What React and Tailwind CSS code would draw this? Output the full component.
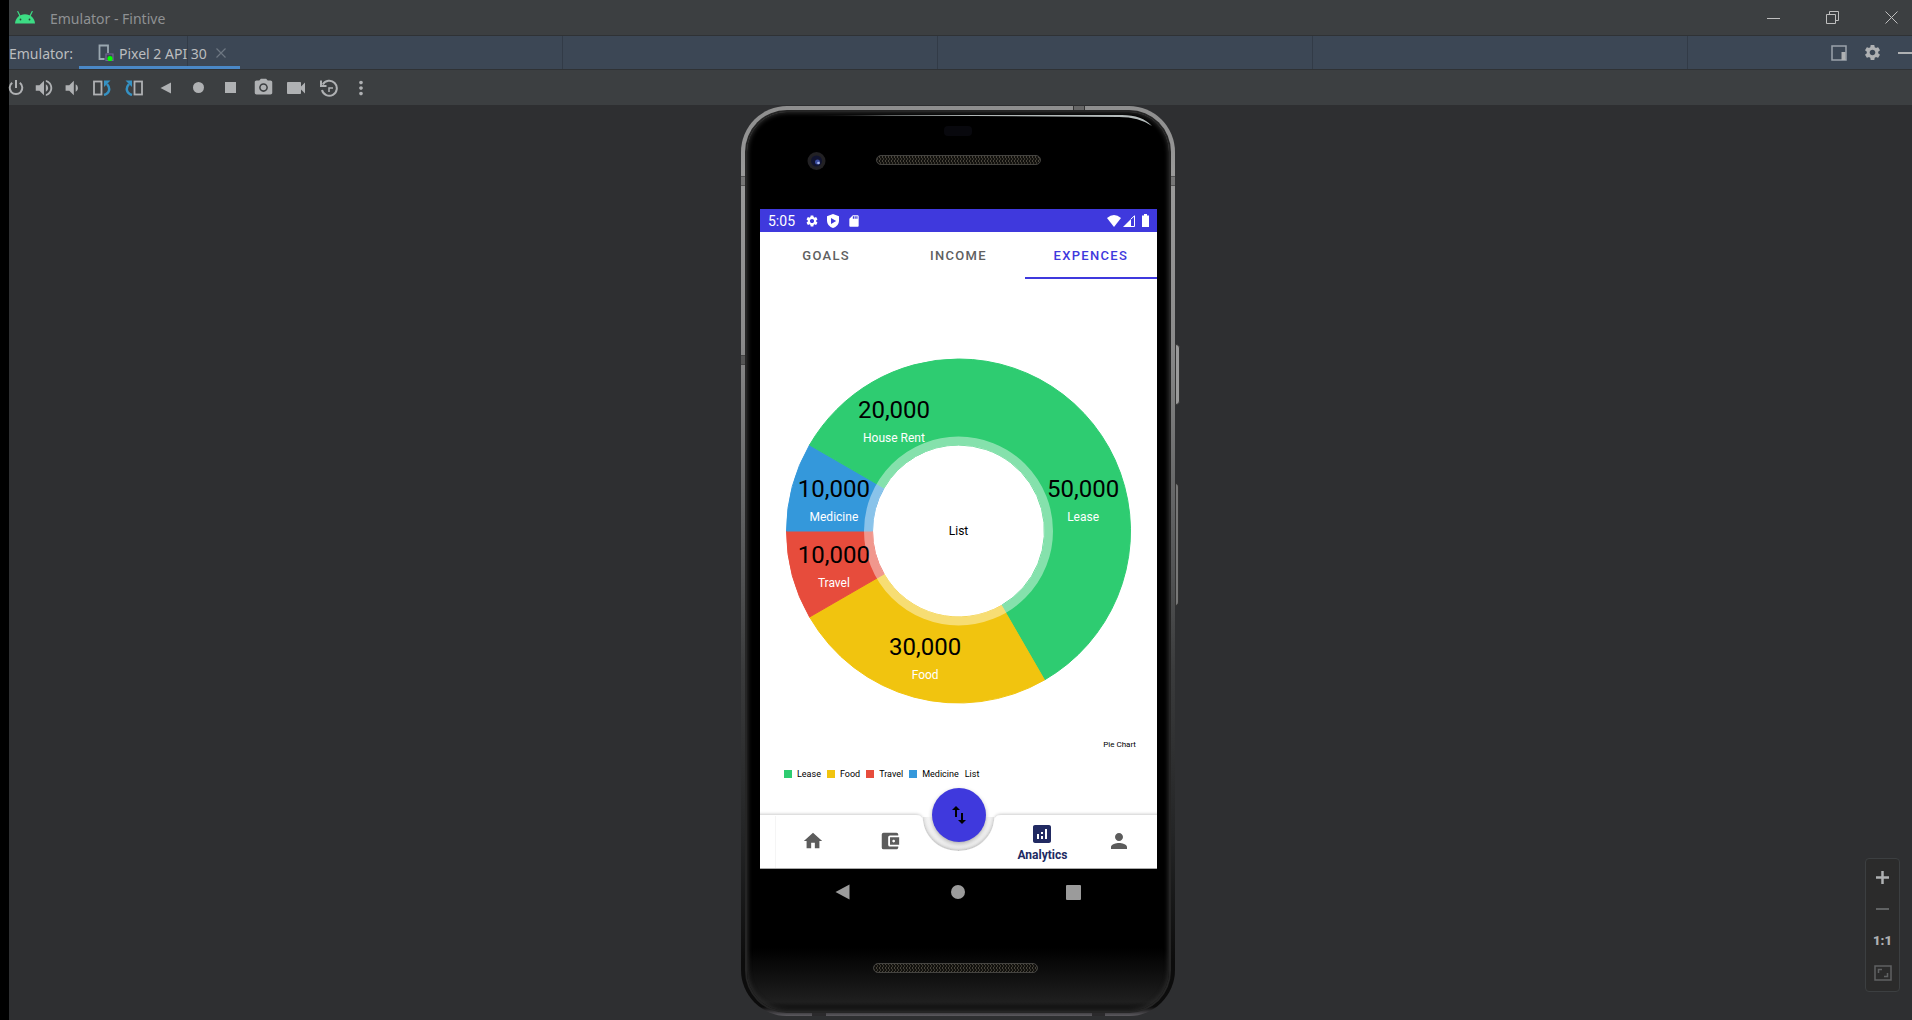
import React from "react";
import {
  MdHome,
  MdAccountBalanceWallet,
  MdAnalytics,
  MdPerson,
  MdSwapVert,
  MdSettings,
  MdSdCard,
  MdPhotoCamera,
  MdVideocam,
  MdVolumeUp,
  MdVolumeDown,
  MdMoreVert,
} from "react-icons/md";

const SLICES = [
  { label: "Lease", value: 50000, color: "#2ecc71" },
  { label: "Food", value: 30000, color: "#f1c40f" },
  { label: "Travel", value: 10000, color: "#e74c3c" },
  { label: "Medicine", value: 10000, color: "#3498db" },
  { label: "House Rent", value: 20000, color: "#2ecc71" },
];

const CX = 198.5;
const CY = 252;
const OUTER = 172;
const INNER = 86;
const RING = 94;
const LABEL = 129;

function point(radius, degrees) {
  const a = (degrees * Math.PI) / 180;
  return [CX + radius * Math.cos(a), CY + radius * Math.sin(a)];
}

function wedge(r0, r1, start, end) {
  const large = end - start > 180 ? 1 : 0;
  const [ax, ay] = point(r1, start);
  const [bx, by] = point(r1, end);
  const [cx, cy] = point(r0, end);
  const [dx, dy] = point(r0, start);
  return `M${ax} ${ay}A${r1} ${r1} 0 ${large} 1 ${bx} ${by}L${cx} ${cy}A${r0} ${r0} 0 ${large} 0 ${dx} ${dy}Z`;
}

function PieChart() {
  const total = SLICES.reduce((sum, s) => sum + s.value, 0);
  let angle = -90;
  const parts = SLICES.map((s) => {
    const start = angle;
    angle += (s.value / total) * 360;
    const [x, y] = point(LABEL, (start + angle) / 2);
    return { ...s, start, end: angle, x, y };
  });
  return (
    <svg viewBox="0 0 397 440" className="block h-[440px] w-full" role="img" aria-label="Expences by category">
      {parts.map((p) => (
        <path key={p.label} d={wedge(INNER, OUTER, p.start, p.end)} fill={p.color} stroke={p.color} strokeLinejoin="round" />
      ))}
      <circle cx={CX} cy={CY} r={(INNER + RING) / 2} fill="none" stroke="#fff" strokeOpacity="0.42" strokeWidth={RING - INNER + 1} />
      {parts.map((p) => (
        <g key={p.label} textAnchor="middle">
          <text x={p.x} y={p.y - 1} className="fill-black text-[24px]">
            {p.value.toLocaleString("en-US")}
          </text>
          <text x={p.x} y={p.y + 23} className="fill-white text-[12px]">
            {p.label}
          </text>
        </g>
      ))}
      <text x={CX} y={CY + 4} textAnchor="middle" className="fill-black text-[12px]">
        List
      </text>
    </svg>
  );
}

function AndroidLogo() {
  return (
    <svg viewBox="0 0 20 13" className="h-[13px] w-5" aria-hidden="true">
      <path d="M0 12.500C.4 7 4.500 3.200 10 3.200S19.600 7 20 12.500Z" fill="#3ddc84" />
      <path d="M5 5L2.800.6M15 5L17.200.6" stroke="#3ddc84" strokeWidth="1.200" strokeLinecap="round" />
      <circle cx="5.500" cy="8.500" r=".9" fill="#2b4636" />
      <circle cx="14.500" cy="8.500" r=".9" fill="#2b4636" />
    </svg>
  );
}

function RotateIcon({ flip }) {
  return (
    <svg viewBox="0 0 18 16" className={flip ? "h-4 w-[18px] -scale-x-100" : "h-4 w-[18px]"} aria-hidden="true">
      <rect x="1" y="1.500" width="7.500" height="13" fill="none" stroke="#afb1b3" strokeWidth="1.800" />
      <path d="M11 15c6-2 6.500-7 3-11" fill="none" stroke="#3592c4" strokeWidth="2.500" />
      <path d="M11 .5H17.500L11 7Z" fill="#3592c4" />
    </svg>
  );
}

function PowerIcon() {
  return (
    <svg viewBox="0 0 16 16" className="size-4 shrink-0" fill="none" stroke="currentColor" strokeWidth="2" aria-hidden="true">
      <path d="M4.200 2.800A6.300 6.300 0 1 0 11.800 2.800M8 0V8" />
    </svg>
  );
}

function HistoryIcon() {
  return (
    <svg viewBox="0 0 18 18" className="size-[18px]" fill="none" stroke="#afb1b3" strokeWidth="2" aria-hidden="true">
      <path d="M2.800 5.500A7.500 7.500 0 1 1 2 11" />
      <path d="M1 1.500V7H6.500" />
      <path d="M13 9H9V13" strokeWidth="1.500" />
    </svg>
  );
}

const TOOLS = [
  { name: "Power", width: "w-[14px]", icon: <PowerIcon /> },
  { name: "Volume up", width: "ml-[7px] w-7", icon: <MdVolumeUp className="size-[22px]" /> },
  { name: "Volume down", width: "w-7", icon: <MdVolumeDown className="size-[22px]" /> },
  { name: "Rotate left", width: "w-8", icon: <RotateIcon /> },
  { name: "Rotate right", width: "w-8", icon: <RotateIcon flip /> },
  {
    name: "Back",
    width: "w-8",
    icon: (
      <svg viewBox="0 0 12 12" className="size-3" fill="currentColor">
        <path d="M11 .5v11L.5 6Z" />
      </svg>
    ),
  },
  { name: "Home", width: "w-8", icon: <span className="size-[11px] rounded-full bg-current" /> },
  { name: "Overview", width: "w-[33px]", icon: <span className="size-[11px] bg-current" /> },
  { name: "Take screenshot", width: "w-[33px]", icon: <MdPhotoCamera className="size-[21px]" /> },
  { name: "Record screen", width: "w-8", icon: <MdVideocam className="size-6" /> },
  { name: "Snapshots", width: "w-[33px]", icon: <HistoryIcon /> },
  { name: "More", width: "w-8", icon: <MdMoreVert className="size-[22px]" /> },
];

function TitleBar() {
  return (
    <header className="flex h-9 items-center border-b border-[#2f3235] bg-[#3c3f41] pr-[14px] pl-[6px] text-[#bfbfbf]">
      <AndroidLogo />
      <h1 className="ml-[15px] pt-px text-[14px] text-[#8f9193]">Emulator - Fintive</h1>
      <div className="ml-auto flex items-center gap-[46px]">
        <button aria-label="Minimize" className="flex">
          <svg viewBox="0 0 13 13" className="size-[13px]" stroke="currentColor">
            <path d="M0 7.500H13" />
          </svg>
        </button>
        <button aria-label="Restore" className="flex">
          <svg viewBox="0 0 13 13" className="size-[13px]" stroke="currentColor" fill="none">
            <path d="M.5 3.500h9v9h-9ZM3.500 3V.5h9v9H10" />
          </svg>
        </button>
        <button aria-label="Close" className="flex">
          <svg viewBox="0 0 13 13" className="size-[13px]" stroke="currentColor">
            <path d="M.5.5l12 12M12.500.5l-12 12" />
          </svg>
        </button>
      </div>
    </header>
  );
}

function DeviceTabs() {
  return (
    <div className="flex h-[34px] items-stretch border-b border-[#2f3235] bg-[#3c4755] bg-[repeating-linear-gradient(to_right,transparent_0px,transparent_374px,#323b47_374px,#323b47_375px)] bg-[position:-196px_0px] text-[14px] text-[#bbbdbf]">
      <span className="w-[70px] self-center pt-px">Emulator:</span>
      <div className="flex w-[161px] items-center border-b-3 border-[#4a88c7] pt-1 pl-[19px]">
        <svg viewBox="0 0 16 18" className="h-[18px] w-4 shrink-0" fill="none" aria-hidden="true">
          <path d="M6.500 15H1.500V1.500H10V9" stroke="#9aa7b0" strokeWidth="1.800" />
          <path d="M8 10h7v6.500H8Z" stroke="#77629a" strokeWidth="1.200" />
          <circle cx="12" cy="14.500" r="2.600" fill="#0f0" />
        </svg>
        <button className="ml-[5px] whitespace-nowrap">Pixel 2 API 30</button>
        <button aria-label="Close tab" className="mr-[14px] ml-auto text-[#6d7782]">
          <svg viewBox="0 0 10 10" className="size-[10px]" stroke="currentColor" strokeWidth="1.200">
            <path d="M.5.5l9 9M9.500.5l-9 9" />
          </svg>
        </button>
      </div>
      <div className="ml-auto flex items-center gap-4 text-[#afb1b3]">
        <button aria-label="Dock">
          <svg viewBox="0 0 16 16" className="size-4" fill="none">
            <path d="M1 1h14v14H1Z" stroke="#9aa3ab" strokeWidth="1.500" />
            <path d="M10.500 7H14.500V15H10.500Z" fill="#afb1b3" />
          </svg>
        </button>
        <button aria-label="Settings">
          <MdSettings className="size-[19px]" />
        </button>
        <button aria-label="Hide" className="h-[2px] w-[14px] bg-[#afb1b3]" />
      </div>
    </div>
  );
}

function Toolbar() {
  return (
    <div className="flex h-[35px] items-center bg-[#3c3f41] text-[#afb1b3]" role="toolbar">
      {TOOLS.map((t) => (
        <button key={t.name} aria-label={t.name} className={`flex h-full items-center justify-center ${t.width}`}>
          {t.icon}
        </button>
      ))}
    </div>
  );
}

function Speaker({ x, y, id }) {
  return (
    <g>
      <defs>
        <pattern id={id} width="3" height="4" patternUnits="userSpaceOnUse">
          <rect width="3" height="4" fill="#12110e" />
          <rect width="1" height="2" fill="#4a463d" />
          <rect x="1" y="2" width="1" height="2" fill="#3b382f" />
        </pattern>
      </defs>
      <rect x={x} y={y} width="164" height="9" rx="4.500" fill={`url(#${id})`} stroke="#444340" />
    </g>
  );
}

function PhoneForehead() {
  return (
    <svg viewBox="0 0 422 97" className="block h-[97px] w-full" aria-hidden="true">
      <defs>
        <linearGradient id="shine">
          <stop offset="0" stopColor="#555" stopOpacity="0" />
          <stop offset=".25" stopColor="#aeb4b4" />
          <stop offset="1" stopColor="#b5bcbc" />
        </linearGradient>
      </defs>
      <path d="M52 3H375Q395 3 405 14Q392 5 372 5Z" fill="url(#shine)" />
      <rect x="197" y="14" width="28" height="10" rx="4" fill="#08080d" />
      <circle cx="69.500" cy="49" r="9" fill="#222124" />
      <circle cx="69.500" cy="49" r="5.500" fill="#10132f" />
      <circle cx="70.500" cy="50" r="2.500" fill="#3a4c9f" />
      <circle cx="71.500" cy="51" r="1.300" fill="#a9b8f0" />
      <Speaker x={129.5} y={43.5} id="meshTop" />
    </svg>
  );
}

function PhoneChin() {
  return (
    <svg viewBox="0 0 422 96" className="block h-24 w-full" aria-hidden="true">
      <Speaker x={126.5} y={48.5} id="meshBottom" />
    </svg>
  );
}

function StatusBar() {
  return (
    <div className="flex h-[23px] items-center bg-[#3f39dd] px-2 text-white">
      <span className="pt-px text-[14px]">5:05</span>
      <div className="ml-[10px] flex items-center gap-2">
        <MdSettings className="size-[14px]" />
        <svg viewBox="0 0 12 14" className="h-[14px] w-3" aria-hidden="true">
          <path d="M6 0L12 2.200V6.500C12 10 9.500 13 6 14 2.500 13 0 10 0 6.500V2.200Z" fill="#fff" />
          <path d="M4 4L9.200 7 4 10Z" fill="#3f39dd" />
        </svg>
        <MdSdCard className="size-[14px]" />
      </div>
      <div className="ml-auto flex items-center gap-[2px]">
        <svg viewBox="0 0 14 12" className="h-3 w-[14px]" aria-hidden="true">
          <path d="M7 12L0 3Q7-3 14 3Z" fill="#fff" />
        </svg>
        <svg viewBox="0 0 12 12" className="size-3" aria-hidden="true">
          <path d="M0 12L8 4V12Z" fill="#fff" />
          <path d="M8 4L11.500.8V11.500H8" fill="none" stroke="#fff" />
        </svg>
        <svg viewBox="0 0 7 13" className="ml-[5px] h-[13px] w-[7px]" aria-hidden="true">
          <path d="M0 1.500H2V0H5V1.500H7V13H0Z" fill="#fff" />
        </svg>
      </div>
    </div>
  );
}

function BottomNav() {
  const item = "flex flex-col items-center justify-center";
  return (
    <nav className="relative border-b border-[#a9a9a9]">
      <svg viewBox="0 -5 397 59" className="absolute bottom-0 left-0 h-[59px] w-full" aria-hidden="true">
        <defs>
          <filter id="lift" x="-5%" y="-20%" width="110%" height="140%">
            <feDropShadow dx="0" dy="-1" stdDeviation="1.500" floodColor="#000" floodOpacity=".2" />
          </filter>
          <radialGradient id="well" gradientUnits="userSpaceOnUse" cx="198.500" cy="0" r="37">
            <stop offset=".8" stopColor="#f8f8f8" />
            <stop offset="1" stopColor="#e2e2e2" />
          </radialGradient>
        </defs>
        <path d="M163 3H234V8Q230 37 198.500 37T163 8Z" fill="url(#well)" />
        <path
          d="M-9 1H156Q162 1 163 7C165 23 179 37 198.500 37S232 23 234 7Q235 1 241 1H406V60H-9Z"
          fill="#fff"
          filter="url(#lift)"
        />
        <path d="M15.500 2V54" stroke="#f5f5f5" />
      </svg>
      <div className="relative grid h-[54px] grid-cols-5 pl-[15px] text-[#5c5c5c]">
        <button aria-label="Home" className={item}>
          <MdHome className="size-[22px]" />
        </button>
        <button aria-label="Wallet" className={item}>
          <MdAccountBalanceWallet className="size-[22px]" />
        </button>
        <button className={`${item} col-start-4 gap-px pt-[2px] text-[#212a62]`}>
          <MdAnalytics className="size-6" />
          <span className="text-[12px] leading-4 font-bold">Analytics</span>
        </button>
        <button aria-label="Profile" className={item}>
          <MdPerson className="size-6" />
        </button>
      </div>
      <button
        aria-label="Add transaction"
        className="absolute -top-[26px] left-1/2 flex size-[54px] -translate-x-1/2 items-center justify-center rounded-full bg-[#3f39dd] text-black shadow-[0_2px_4px_rgba(0,0,0,0.3)]"
      >
        <MdSwapVert className="size-6" />
      </button>
    </nav>
  );
}

function AppScreen() {
  const tab = "border-b-2 pt-[2px] text-[13px] font-medium tracking-widest";
  return (
    <div className="mr-3 ml-[13px] bg-white font-[Roboto,sans-serif]">
      <StatusBar />
      <div className="grid h-[47px] grid-cols-3" role="tablist">
        <button role="tab" className={`${tab} border-transparent text-[#606060]`}>GOALS</button>
        <button role="tab" className={`${tab} border-transparent text-[#606060]`}>INCOME</button>
        <button role="tab" aria-selected="true" className={`${tab} border-[#3f39dd] text-[#3f39dd]`}>EXPENCES</button>
      </div>
      <PieChart />
      <p className="mt-[18px] mr-[21px] text-right text-[8px] leading-4 text-black">Pie Chart</p>
      <ul className="mt-[13px] flex items-center pb-8 pl-6 text-[9px] leading-4 text-black">
        {SLICES.slice(0, 4).map((s) => (
          <li key={s.label} className="mr-[6px] flex items-center gap-[5px]">
            <span className="size-2" style={{ backgroundColor: s.color }} />
            {s.label}
          </li>
        ))}
        <li>List</li>
      </ul>
      <BottomNav />
    </div>
  );
}

function SystemNav() {
  return (
    <div className="flex h-[46px] items-center justify-between px-[88px] text-[#9b9b9b]">
      <button aria-label="Back">
        <svg viewBox="0 0 15 16" className="h-4 w-[15px]" fill="currentColor">
          <path d="M14.500.5V15.500L.5 8Z" />
        </svg>
      </button>
      <button aria-label="Home" className="size-[14px] rounded-full bg-current" />
      <button aria-label="Recents" className="size-[15px] rounded-[1px] bg-current" />
    </div>
  );
}

function Phone() {
  return (
    <div className="mt-px pr-[5px]">
      <div className="relative w-[434px] rounded-[46px] bg-[linear-gradient(to_bottom,#8e8e8e_0%,#9a9a9a_8%,#8a8a8a_26%,#606162_45%,#3a3b3c_62%,#242526_80%,#0c0c0c_94%,#0c0c0c_99%,#5d5b60_100%)] px-[6px] pt-[6px] pb-[5px]">
        <span className="absolute top-[238px] -right-[5px] h-[61px] w-[5px] rounded-r-sm border border-[#333] bg-[#9a9a9a]" />
        <span className="absolute top-[377px] -right-1 h-[123px] w-1 rounded-r-sm border border-[#333] bg-[#777]" />
        <span className="absolute top-0 right-[90px] h-[5px] w-3 border-x border-[#333] bg-[#666]" />
        <span className="absolute top-[70px] left-0 h-[10px] w-[6px] border-y border-[#555] bg-[#777]" />
        <span className="absolute top-[70px] right-0 h-[10px] w-[6px] border-y border-[#555] bg-[#777]" />
        <span className="absolute top-[249px] left-0 h-[10px] w-[6px] border-y border-[#444] bg-[#555]" />
        <span className="absolute bottom-0 left-[71px] h-[5px] w-[14px] bg-[#2b2a2c]" />
        <span className="absolute right-[70px] bottom-0 h-[5px] w-[13px] bg-[#2b2a2c]" />
        <div className="relative overflow-hidden rounded-[40px] bg-[linear-gradient(to_bottom,#000_93%,#1f1f1f_99%,#0b0b0b_100%)] shadow-[0_0_0_2px_#252525,inset_0_0_4px_1px_#2c2c2c]">
          <PhoneForehead />
          <AppScreen />
          <SystemNav />
          <PhoneChin />
        </div>
      </div>
    </div>
  );
}

function ZoomControls() {
  const button = "flex h-8 w-full items-center justify-center";
  return (
    <div className="absolute right-3 bottom-7 flex w-[35px] flex-col items-center rounded-[4px] border border-[#3c3f41] bg-[#2b2b2b] py-[2px] text-[#afb1b3]">
      <button aria-label="Zoom in" className={button}>
        <svg viewBox="0 0 13 13" className="size-[13px]" stroke="currentColor" strokeWidth="2.500">
          <path d="M0 6.500H13M6.500 0V13" />
        </svg>
      </button>
      <button aria-label="Zoom out" className={button}>
        <span className="h-[2px] w-[13px] bg-[#606263]" />
      </button>
      <button className={`${button} font-[Roboto,sans-serif] text-[13px] font-black`}>1:1</button>
      <button aria-label="Zoom to fit" className={button}>
        <svg viewBox="0 0 18 16" className="h-4 w-[18px]" fill="none" stroke="#606263" strokeWidth="1.500">
          <path d="M1 1H17V15H1ZM4.500 8V4.500H8M10 11.500H13.500V8" />
        </svg>
      </button>
    </div>
  );
}

export default function App() {
  return (
    <div className="flex min-h-screen flex-col border-l-9 border-black bg-[#2e2f31] font-['Noto_Sans',sans-serif]">
      <TitleBar />
      <DeviceTabs />
      <Toolbar />
      <main className="relative flex flex-1 items-start justify-center">
        <Phone />
        <ZoomControls />
      </main>
    </div>
  );
}
